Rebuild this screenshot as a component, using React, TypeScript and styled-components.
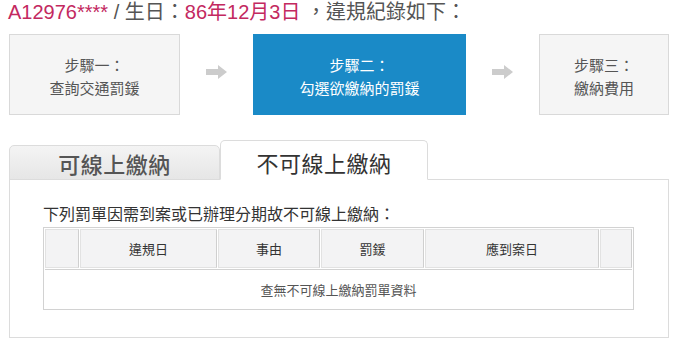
import styled, { createGlobalStyle } from 'styled-components';

const GlobalStyle = createGlobalStyle`
  html, body {
    margin: 0;
    padding: 0;
    background: #fff;
  }
  body {
    font-family: "Liberation Sans", "Noto Sans CJK TC", sans-serif;
  }
`;

const Page = styled.div`
  width: 679px;
  height: 351px;
  padding: 0 10px 0 9px;
  box-sizing: border-box;
  overflow: hidden;
`;

const Header = styled.div`
  margin-left: -1px;
  height: 26px;
  font-size: 20px;
  line-height: 24px;
  color: #555;
  white-space: nowrap;
`;

const Mark = styled.span`
  color: #c3295f;
`;

const Steps = styled.div`
  display: flex;
  align-items: stretch;
  height: 81px;
  margin-top: 8px;
`;

const StepBox = styled.div<{ $active?: boolean; $width: number }>`
  width: ${(p) => p.$width}px;
  box-sizing: border-box;
  display: flex;
  flex-direction: column;
  align-items: center;
  justify-content: center;
  font-family: "Noto Sans CJK TC", sans-serif;
  font-size: 15px;
  line-height: 23px;
  padding-top: 2px;
  background: ${(p) => (p.$active ? '#1a8ac7' : '#f5f5f5')};
  color: ${(p) => (p.$active ? '#fff' : '#555')};
  border: 1px solid ${(p) => (p.$active ? '#1a8ac7' : '#d9d9d9')};
`;

const ArrowSlot = styled.div`
  flex: 1;
  display: flex;
  align-items: center;
  justify-content: center;
  padding-bottom: 6px;
`;

const Tabs = styled.div`
  display: flex;
  align-items: flex-end;
  margin-top: 25px;
  height: 40px;
  position: relative;
  z-index: 1;
`;

const Tab = styled.div<{ $active?: boolean }>`
  box-sizing: border-box;
  width: ${(p) => (p.$active ? 208 : 211)}px;
  height: ${(p) => (p.$active ? 40 : 35)}px;
  display: flex;
  align-items: center;
  justify-content: center;
  font-family: "Noto Sans CJK TC", sans-serif;
  font-size: 22px;
  letter-spacing: 0.5px;
  font-weight: ${(p) => (p.$active ? 400 : 500)};
  color: ${(p) => (p.$active ? '#333' : '#555')};
  border: 1px solid #dcdcdc;
  border-bottom: ${(p) => (p.$active ? '1px solid #fff' : '1px solid #dcdcdc')};
  border-radius: 5px 5px 0 0;
  background: ${(p) => (p.$active ? '#fff' : 'linear-gradient(#f4f4f4, #e6e6e6)')};
  padding-top: ${(p) => (p.$active ? 4 : 0)}px;
`;

const Panel = styled.div`
  margin-top: -1px;
  height: 159px;
  box-sizing: border-box;
  border: 1px solid #dcdcdc;
  padding: 22px 0 0 33px;
`;

const Notice = styled.div`
  font-family: "Noto Sans CJK TC", sans-serif;
  font-size: 16px;
  line-height: 22px;
  color: #333;
`;

const Table = styled.table`
  margin-top: 3px;
  width: 591px;
  table-layout: fixed;
  border: 1px solid #d2d2d2;
  border-spacing: 1px;
  font-family: "Noto Sans CJK TC", sans-serif;
  font-size: 13px;
`;

const Th = styled.th`
  height: 37px;
  padding: 0;
  background: #f3f3f4;
  border: 1px solid #e2e2e2;
  border-right-color: #cfcfcf;
  font-weight: 400;
  color: #333;
`;

const Td = styled.td`
  height: 38px;
  padding: 0;
  text-align: center;
  color: #555;
  border-top: 1px solid #d2d2d2;
`;

const Arrow = () => (
  <svg width="21" height="14" viewBox="0 0 21 14">
    <path d="M0 4h12V0l9 7-9 7v-4H0z" fill="#cccccc" />
  </svg>
);

export default function App() {
  return (
    <Page>
      <GlobalStyle />
      <Header>
        <Mark>A12976****</Mark> / 生日：<Mark>86年12月3日</Mark> ，違規紀錄如下：
      </Header>
      <Steps>
        <StepBox $width={171}>
          <div>步驟一：</div>
          <div>查詢交通罰鍰</div>
        </StepBox>
        <ArrowSlot>
          <Arrow />
        </ArrowSlot>
        <StepBox $width={213} $active>
          <div>步驟二：</div>
          <div>勾選欲繳納的罰鍰</div>
        </StepBox>
        <ArrowSlot>
          <Arrow />
        </ArrowSlot>
        <StepBox $width={130}>
          <div>步驟三：</div>
          <div>繳納費用</div>
        </StepBox>
      </Steps>
      <Tabs>
        <Tab>可線上繳納</Tab>
        <Tab $active>不可線上繳納</Tab>
      </Tabs>
      <Panel>
        <Notice>下列罰單因需到案或已辦理分期故不可線上繳納：</Notice>
        <Table>
          <colgroup>
            <col style={{ width: 34 }} />
            <col style={{ width: 137 }} />
            <col style={{ width: 102 }} />
            <col style={{ width: 103 }} />
            <col style={{ width: 174 }} />
            <col />
          </colgroup>
          <thead>
            <tr>
              <Th />
              <Th>違規日</Th>
              <Th>事由</Th>
              <Th>罰鍰</Th>
              <Th>應到案日</Th>
              <Th />
            </tr>
          </thead>
          <tbody>
            <tr>
              <Td colSpan={6}>查無不可線上繳納罰單資料</Td>
            </tr>
          </tbody>
        </Table>
      </Panel>
    </Page>
  );
}
